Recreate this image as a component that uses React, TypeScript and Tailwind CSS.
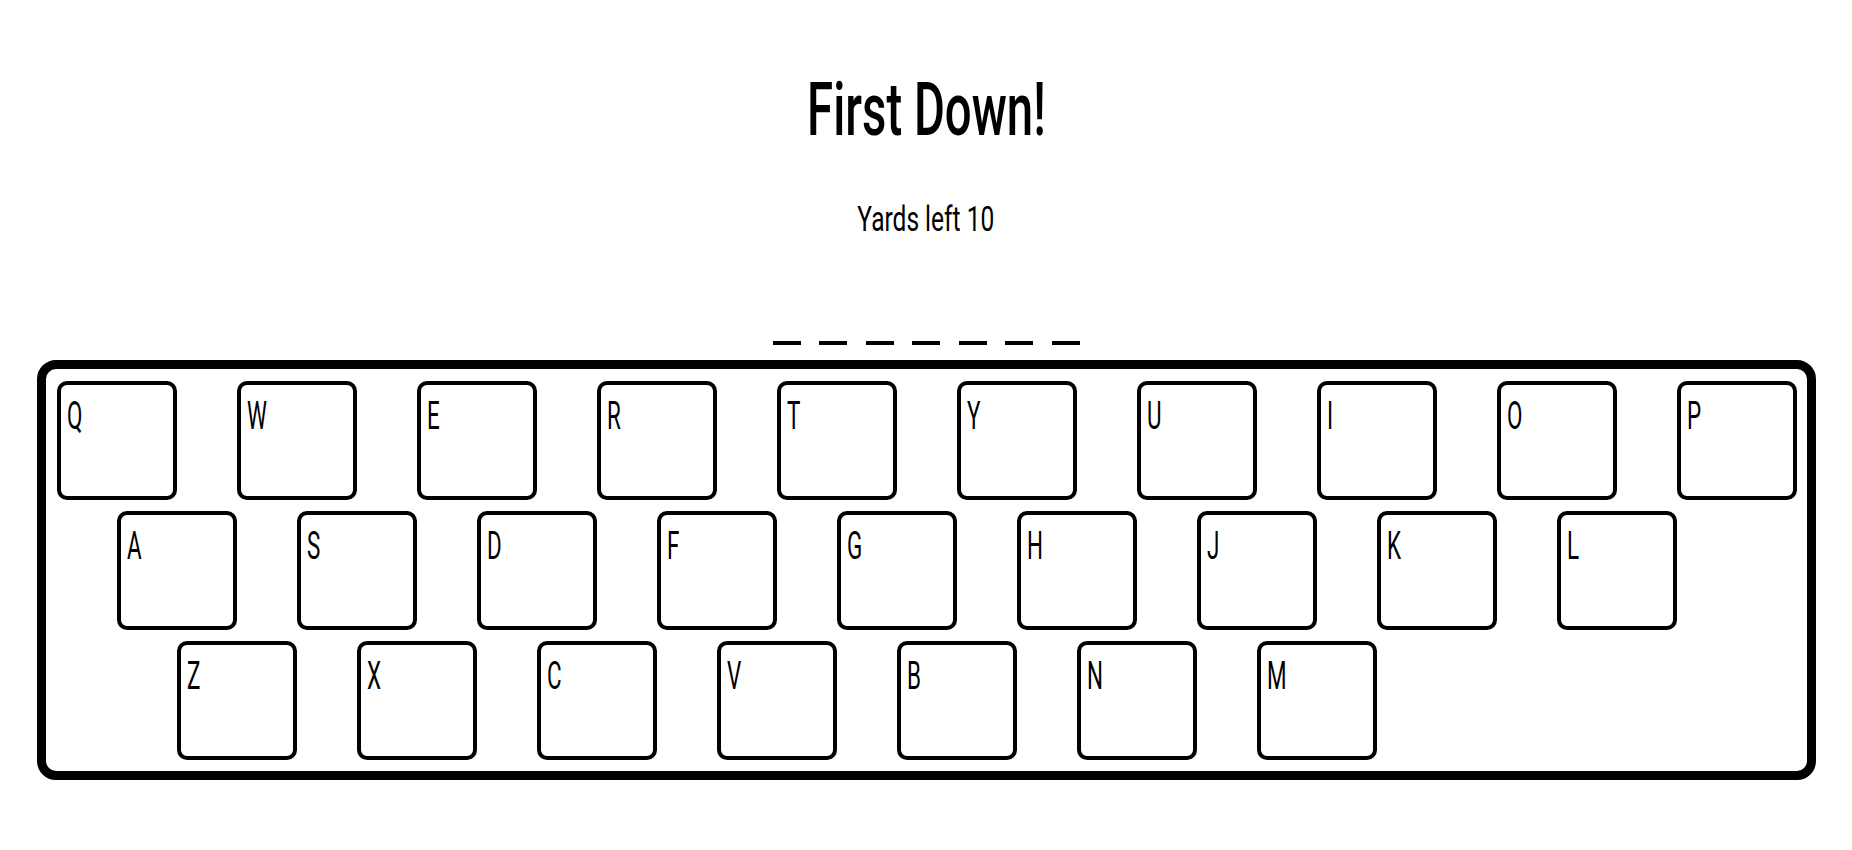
import React from "react";

const rows = [
  ["Q", "W", "E", "R", "T", "Y", "U", "I", "O", "P"],
  ["A", "S", "D", "F", "G", "H", "J", "K", "L"],
  ["Z", "X", "C", "V", "B", "N", "M"],
];

const font = {
  fontFamily: 'Roboto, "Liberation Sans", sans-serif',
};

export default function App() {
  return (
    <div className="min-h-screen w-full bg-white flex flex-col items-center text-black" style={font}>
      <h1 className="mt-[73px] text-[74px] leading-none font-medium scale-x-[0.64] whitespace-nowrap">
        First Down!
      </h1>
      <p className="mt-[55px] text-[35px] leading-none font-normal scale-x-[0.70] whitespace-nowrap">
        Yards left 10
      </p>
      <div className="mt-[104px] flex gap-[18.5px]">
        {Array.from({ length: 7 }).map((_, i) => (
          <div key={i} className="w-[28px] h-[4px] bg-black" />
        ))}
      </div>
      <div className="mt-[15px] w-[1779px] border-[9px] border-black rounded-[19px] pt-[12px] pb-[11px] pl-[11px] pr-[9px] flex flex-col gap-[11px]">
        {rows.map((row, r) => (
          <div
            key={r}
            className={`flex gap-[60px] ${r === 1 ? "pl-[60px]" : r === 2 ? "pl-[120px]" : ""}`}
          >
            {row.map((k) => (
              <div
                key={k}
                className="w-[120px] h-[119px] border-[4px] border-black rounded-[10px] pl-[6px] pt-[12px]"
              >
                <span className="block origin-left scale-x-[0.59] text-[38px] leading-none font-normal">
                  {k}
                </span>
              </div>
            ))}
          </div>
        ))}
      </div>
    </div>
  );
}
